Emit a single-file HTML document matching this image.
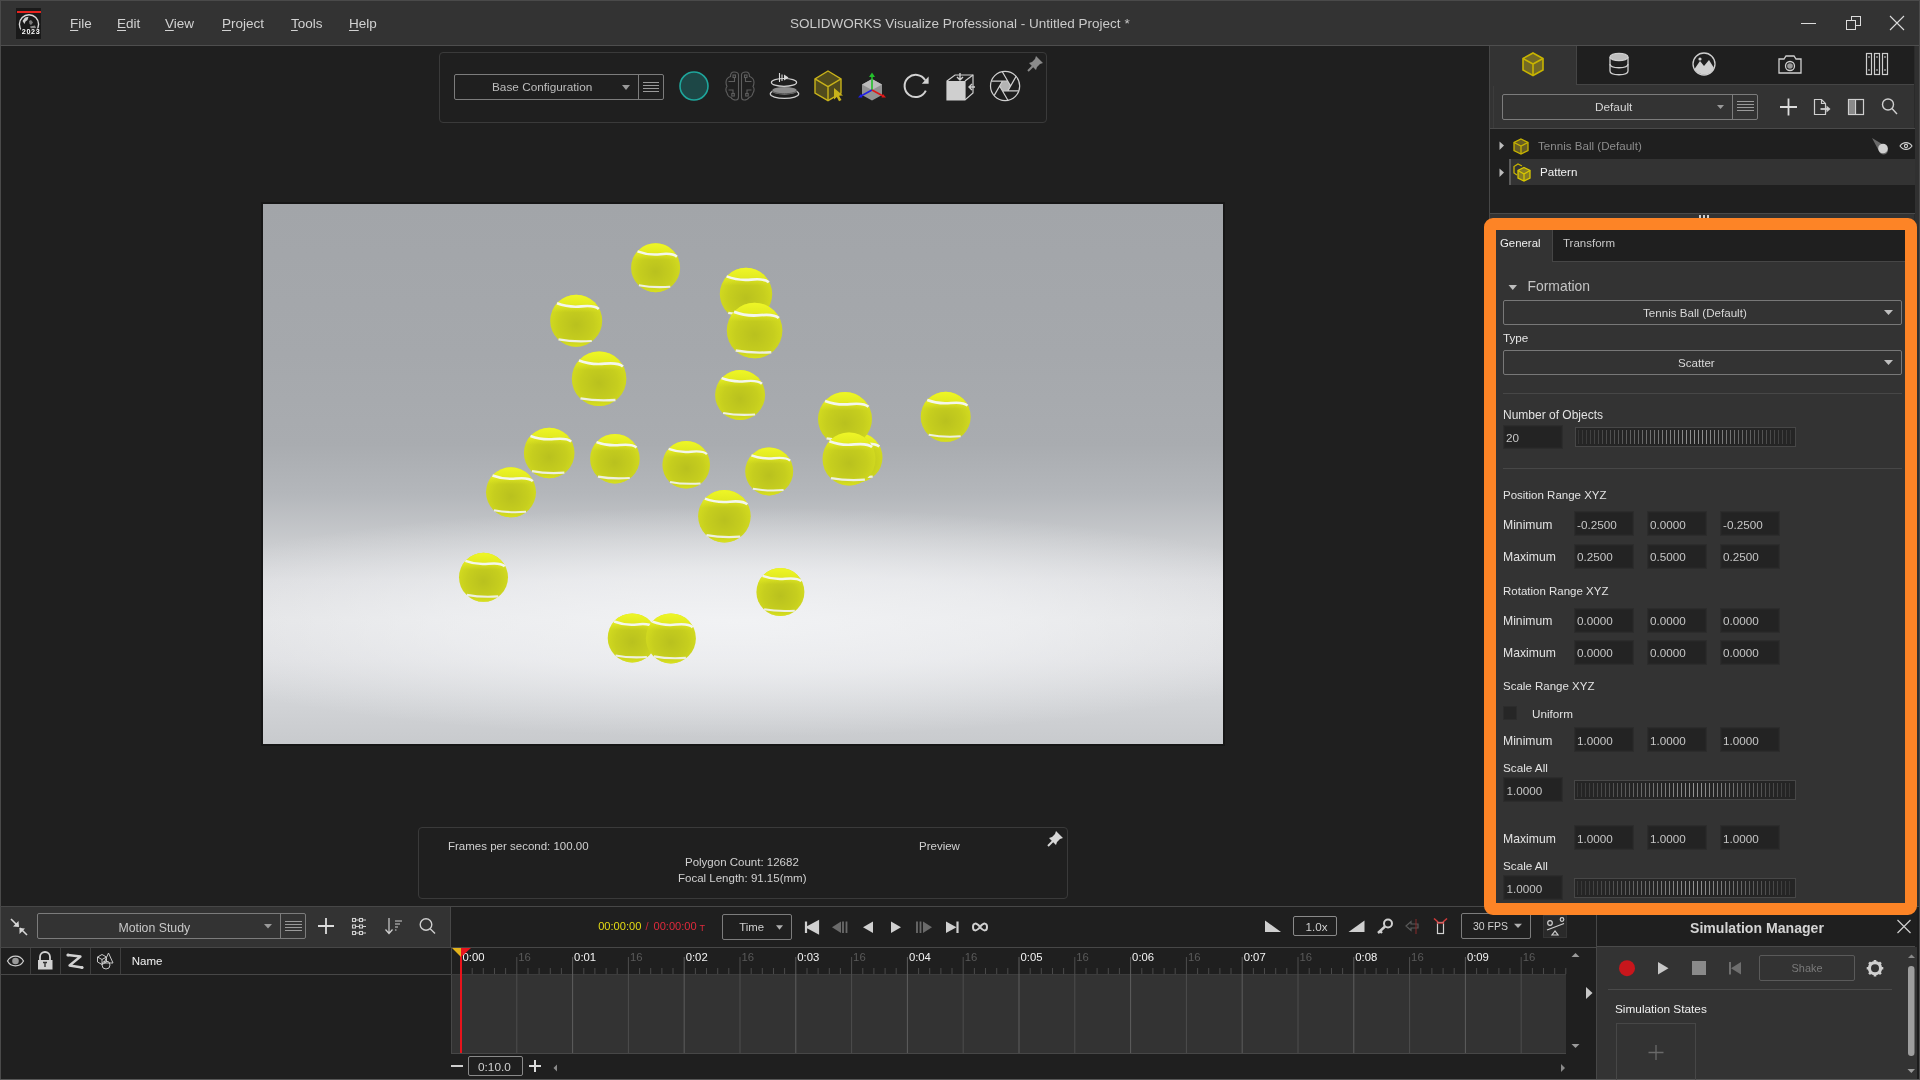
<!DOCTYPE html>
<html><head><meta charset="utf-8">
<style>
*{box-sizing:border-box;margin:0;padding:0}
html,body{width:1920px;height:1080px;overflow:hidden;background:#1f1f1f;font-family:"Liberation Sans",sans-serif;color:#d0d0d0}
.a{position:absolute}
.t{position:absolute;white-space:pre;line-height:1}
svg{position:absolute;overflow:visible}
body{will-change:transform}
.u{text-decoration:underline;text-underline-offset:2px}
.box{position:absolute;background:#232323;border:1px solid #2c2c2c;box-shadow:inset 0 0 0 1px #262626}
.lbl{position:absolute;white-space:pre;line-height:1;font-size:12px;color:#e2e2e2}
.val{position:absolute;white-space:pre;line-height:1;font-size:12px;color:#c4c4c4}
</style></head><body>
<!-- window border -->
<div class="a" style="left:0;top:0;width:1920px;height:1080px;border-left:1px solid #4a4a4a;border-top:1px solid #4a4a4a"></div>

<!-- TITLE BAR -->
<div class="a" style="left:1px;top:1px;width:1919px;height:44px;background:#333333"></div>
<div class="a" style="left:0;top:45px;width:1920px;height:1px;background:#4e4e4e"></div>
<!-- logo -->
<div class="a" style="left:16px;top:8px;width:25px;height:31px;background:#1a1a1a"></div>
<div class="a" style="left:17px;top:11px;width:24px;height:2px;background:#e8231f"></div>
<svg style="left:0;top:0" width="60" height="45">
 <circle cx="29" cy="24.3" r="9.6" fill="none" stroke="#d8d8d8" stroke-width="1.4"/>
 <path d="M22.5,21 L25,17.5 L28.5,16.8 L27.5,20 L25.5,21.5 L24.5,24 Z" fill="#cfcfcf"/>
 <path d="M29,21 L31,20 L33,22.5 L31,25 L29.5,24 Z" fill="#7a7a7a"/>
 <path d="M30,26.5 L35,25.5 L36,28 L31,28.5 Z" fill="#8a8a8a"/>
 <rect x="21" y="28.5" width="20" height="6" fill="#1a1a1a"/>
 <text x="21.8" y="33.9" font-family="Liberation Sans" font-weight="bold" font-size="7.2" letter-spacing="0.65" fill="#ffffff">2023</text>
</svg>
<div class="t" style="left:70px;top:17px;font-size:13.5px;color:#d2d2d2"><span class="u">F</span>ile</div>
<div class="t" style="left:117px;top:17px;font-size:13.5px;color:#d2d2d2"><span class="u">E</span>dit</div>
<div class="t" style="left:165px;top:17px;font-size:13.5px;color:#d2d2d2"><span class="u">V</span>iew</div>
<div class="t" style="left:222px;top:17px;font-size:13.5px;color:#d2d2d2"><span class="u">P</span>roject</div>
<div class="t" style="left:291px;top:17px;font-size:13.5px;color:#d2d2d2"><span class="u">T</span>ools</div>
<div class="t" style="left:349px;top:17px;font-size:13.5px;color:#d2d2d2"><span class="u">H</span>elp</div>
<div class="t" style="left:790px;top:17px;font-size:13.5px;color:#cacaca">SOLIDWORKS Visualize Professional - Untitled Project *</div>
<!-- window controls -->
<div class="a" style="left:1801px;top:23px;width:15px;height:1px;background:#dcdcdc"></div>
<svg style="left:0;top:0" width="1920" height="45">
 <rect x="1851.5" y="16.5" width="9" height="9" fill="none" stroke="#dcdcdc" stroke-width="1"/>
 <rect x="1846.5" y="20.5" width="9" height="9" fill="#333" stroke="#dcdcdc" stroke-width="1"/>
 <path d="M1890,16 L1904,30 M1904,16 L1890,30" stroke="#dcdcdc" stroke-width="1.1"/>
</svg>

<!-- VIEWPORT TOOLBAR -->
<div class="a" style="left:439px;top:52px;width:608px;height:71px;border:1px solid #3a3a3a;border-radius:4px"></div>
<div class="a" style="left:454px;top:74px;width:210px;height:26px;border:1px solid #7c7c7c;border-radius:2px"></div>
<div class="a" style="left:638px;top:75px;width:1px;height:24px;background:#7c7c7c"></div>
<div class="t" style="left:492px;top:82px;font-size:11.8px;color:#bdbdbd">Base Configuration</div>
<svg style="left:0;top:0" width="1100" height="130">
 <path d="M622,85 L630,85 L626,90 Z" fill="#9a9a9a"/>
 <path d="M643,82.5 H659 M643,85.5 H659 M643,88.5 H659 M643,91.5 H659" stroke="#9a9a9a" stroke-width="1"/>
 <circle cx="694" cy="86" r="14" fill="#1d4746" stroke="#1fa69c" stroke-width="1.6"/>
 <!-- brain -->
 <g fill="none" stroke="#5e5e5e" stroke-width="1.1">
  <path d="M738.5,75 C738.5,72.5 736.5,72 734,72 C731.5,72 730.5,74 730.5,76.5 C727.5,77.5 726,79.5 726,82.5 C726,84.5 726.5,85.5 727,86.5 C725.8,88 725.8,91 727,93 C727.5,95.5 729,97 731,97.5 C732,99.5 734,100 736,100 C738,100 738.5,99 738.5,97 Z"/>
  <path d="M741.5,75 C741.5,72.5 743.5,72 746,72 C748.5,72 749.5,74 749.5,76.5 C752.5,77.5 754,79.5 754,82.5 C754,84.5 753.5,85.5 753,86.5 C754.2,88 754.2,91 753,93 C752.5,95.5 751,97 749,97.5 C748,99.5 746,100 744,100 C742,100 741.5,99 741.5,97 Z"/>
  <path d="M728.5,81.5 H734.5 V77.5 M728.5,90 H733 V93.5 M751.5,81.5 H745.5 V77.5 M751.5,90 H747 V93.5"/>
  <rect x="733" y="75" width="2.5" height="2.5"/><rect x="731.8" y="93.5" width="2.5" height="2.5"/>
  <rect x="744.5" y="75" width="2.5" height="2.5"/><rect x="745.7" y="93.5" width="2.5" height="2.5"/>
 </g>
 <!-- turntable -->
 <g>
  <ellipse cx="784.5" cy="93.8" rx="14.2" ry="4.6" fill="none" stroke="#d0d0d0" stroke-width="1.3"/>
  <ellipse cx="784.5" cy="90.8" rx="12.5" ry="3.9" fill="#8c8c8c"/>
  <path d="M772,90 C772,95 797,95 797,90" fill="none" stroke="#555" stroke-width="1"/>
  <ellipse cx="784" cy="82.4" rx="12.6" ry="3.9" fill="none" stroke="#d0d0d0" stroke-width="1.2"/>
  <path d="M779.5,73 V82 M782,74.5 V81" stroke="#d8d8d8" stroke-width="1.1"/>
  <path d="M784,74.5 L788.5,77.5 L784,80.5 Z" fill="#d8d8d8"/>
 </g>
 <!-- yellow cube with cursor -->
 <g stroke="#c8b21a" stroke-width="1.4" fill="rgba(200,178,26,0.3)">
  <path d="M828,71 L841,78.8 L841,93.2 L828,100.7 L815,93.2 L815,78.8 Z"/>
  <path d="M815,78.8 L828,86.6 L841,78.8 M828,86.6 V100.7" fill="none"/>
 </g>
 <path d="M834,88 L843,95.5 L839,95.8 L841.5,100 L839,101.2 L836.8,97 L834,99.5 Z" fill="#c8b21a"/>
 <!-- axis cube -->
 <g>
  <path d="M872,79 L882,84.5 L882,95 L872,100.5 L862,95 L862,84.5 Z" fill="#a8a8a8" fill-opacity="0.85"/>
  <path d="M862,84.5 L872,90 L882,84.5 L872,79 Z" fill="#bcbcbc"/>
  <path d="M872,90 V76" stroke="#22c02a" stroke-width="1.6"/>
  <path d="M869,77 L872,72.5 L875,77 Z" fill="#22c02a"/>
  <path d="M872,90 L861,96" stroke="#2020e8" stroke-width="1.6"/>
  <path d="M858,97.5 L861,94 L862.5,97.5 Z" fill="#2020e8"/>
  <path d="M872,90 L883,96" stroke="#e01818" stroke-width="1.6"/>
  <path d="M886,97.5 L883,94 L881.5,97.5 Z" fill="#e01818"/>
 </g>
 <!-- refresh -->
 <path d="M925.8,90.6 A11.1,11.1 0 1 1 925.2,80.2" fill="none" stroke="#d2d2d2" stroke-width="2"/>
 <path d="M928.6,76.6 L928.6,83.8 L921.8,83.8 Z" fill="#d2d2d2"/>
 <!-- cube arrows -->
 <g>
  <path d="M947,81 L955,75 L973,75 L973,93 L965,100 L947,100 Z" fill="none" stroke="#cfcfcf" stroke-width="1.2"/>
  <rect x="947" y="81" width="18" height="19" fill="#cfcfcf"/>
  <path d="M965,81 L973,75 M965,81 V100" stroke="#cfcfcf" stroke-width="1.2"/>
  <path d="M960,73 V79 M957,77 L960,80 L963,77" fill="none" stroke="#cfcfcf" stroke-width="1.4"/>
  <path d="M975,87 H969 M972,84 L969,87 L972,90" fill="none" stroke="#cfcfcf" stroke-width="1.4"/>
 </g>
 <!-- aperture -->
 <path d="M1010.6,86.0 L1007.9,90.8 L1002.4,90.8 L999.6,86.0 L1002.4,81.2 L1007.9,81.2 Z" fill="#b4b4b4"/>
 <g fill="none" stroke="#d0d0d0" stroke-width="1.2">
  <circle cx="1005.1" cy="86" r="14.6"/>
  <path d="M1007.9,90.8 L1016.1,76.4 M1002.4,90.8 L1018.9,90.8 M999.6,86.0 L1007.9,100.3 M1002.4,81.2 L994.1,95.6 M1007.9,81.2 L991.3,81.2 M1010.6,86.0 L1002.3,71.7"/>
 </g>
 <!-- pin -->
 <g fill="#8a8a8a">
  <path d="M1036,56 L1043,63 L1040,64 L1037,67 L1036,70 L1029,63 L1032,62 L1035,59 Z"/>
  <path d="M1033,66 L1028,71" stroke="#8a8a8a" stroke-width="2"/>
 </g>
</svg>
<!-- RENDER VIEW -->
<div class="a" style="left:261px;top:202px;width:964px;height:544px;background:#161616"></div>
<div class="a" style="left:263px;top:204px;width:960px;height:540px;overflow:hidden;background:radial-gradient(ellipse 640px 115px at 470px 418px,rgba(246,247,249,0.78) 0%,rgba(246,247,249,0.55) 45%,rgba(246,247,249,0.22) 78%,rgba(246,247,249,0) 100%),linear-gradient(180deg,#a2a5a9 0px,#a5a8ac 150px,#a9acb0 240px,#b4b7bb 290px,#c8cacd 336px,#d9dadd 376px,#e0e1e3 416px,#dcdde0 456px,#d2d4d7 496px,#c8cacd 540px)">
 
 <svg style="left:0;top:0" width="960" height="540">
  <defs><radialGradient id="bg" cx="0.5" cy="0.58" r="0.62"><stop offset="0" stop-color="#b9c11e"/><stop offset="0.55" stop-color="#c6ce1e"/><stop offset="1" stop-color="#d8e020"/></radialGradient><linearGradient id="tp" x1="0" y1="0" x2="0" y2="1"><stop offset="0" stop-color="#eef626" stop-opacity="1"/><stop offset="0.18" stop-color="#e6ee22" stop-opacity="0.9"/><stop offset="0.34" stop-color="#dde520" stop-opacity="0"/><stop offset="0.85" stop-color="#d6de20" stop-opacity="0"/><stop offset="1" stop-color="#dce420" stop-opacity="0.8"/></linearGradient></defs>
<g transform="translate(483.0,90.0)"><circle r="26.2" fill="url(#bg)"/><circle r="26.2" fill="url(#tp)"/><path d="M-19.4,-17.6 Q-7.9,-13.1 5.2,-14.4 T22.8,-11.8" stroke="#f4f6ec" stroke-width="2.6" fill="none"/><path d="M-17.8,18.9 Q-2.6,21.7 15.7,20.4" stroke="#eef0e0" stroke-width="2.2" fill="none"/></g>
<g transform="translate(491.6,126.5)"><circle r="27.8" fill="url(#bg)"/><circle r="27.8" fill="url(#tp)"/><path d="M-20.6,-18.6 Q-8.3,-13.9 5.6,-15.3 T24.2,-12.5" stroke="#f4f6ec" stroke-width="2.8" fill="none"/><path d="M-18.9,20.0 Q-2.8,23.1 16.7,21.7" stroke="#eef0e0" stroke-width="2.4" fill="none"/></g>
<g transform="translate(392.6,63.7)"><circle r="24.5" fill="url(#bg)"/><circle r="24.5" fill="url(#tp)"/><path d="M-18.1,-16.4 Q-7.3,-12.2 4.9,-13.5 T21.3,-11.0" stroke="#f4f6ec" stroke-width="2.5" fill="none"/><path d="M-16.7,17.6 Q-2.5,20.3 14.7,19.1" stroke="#eef0e0" stroke-width="2.1" fill="none"/></g>
<g transform="translate(313.2,116.7)"><circle r="26.0" fill="url(#bg)"/><circle r="26.0" fill="url(#tp)"/><path d="M-19.2,-17.4 Q-7.8,-13.0 5.2,-14.3 T22.6,-11.7" stroke="#f4f6ec" stroke-width="2.6" fill="none"/><path d="M-17.7,18.7 Q-2.6,21.6 15.6,20.3" stroke="#eef0e0" stroke-width="2.2" fill="none"/></g>
<g transform="translate(336.1,174.7)"><circle r="27.3" fill="url(#bg)"/><circle r="27.3" fill="url(#tp)"/><path d="M-20.2,-18.3 Q-8.2,-13.7 5.5,-15.0 T23.8,-12.3" stroke="#f4f6ec" stroke-width="2.7" fill="none"/><path d="M-18.6,19.7 Q-2.7,22.7 16.4,21.3" stroke="#eef0e0" stroke-width="2.3" fill="none"/></g>
<g transform="translate(477.1,191.0)"><circle r="25.0" fill="url(#bg)"/><circle r="25.0" fill="url(#tp)"/><path d="M-18.5,-16.8 Q-7.5,-12.5 5.0,-13.8 T21.8,-11.2" stroke="#f4f6ec" stroke-width="2.5" fill="none"/><path d="M-17.0,18.0 Q-2.5,20.8 15.0,19.5" stroke="#eef0e0" stroke-width="2.1" fill="none"/></g>
<g transform="translate(682.7,212.8)"><circle r="25.0" fill="url(#bg)"/><circle r="25.0" fill="url(#tp)"/><path d="M-18.5,-16.8 Q-7.5,-12.5 5.0,-13.8 T21.8,-11.2" stroke="#f4f6ec" stroke-width="2.5" fill="none"/><path d="M-17.0,18.0 Q-2.5,20.8 15.0,19.5" stroke="#eef0e0" stroke-width="2.1" fill="none"/></g>
<g transform="translate(595.0,253.5)"><circle r="24.5" fill="url(#bg)"/><circle r="24.5" fill="url(#tp)"/><path d="M-18.1,-16.4 Q-7.3,-12.2 4.9,-13.5 T21.3,-11.0" stroke="#f4f6ec" stroke-width="2.5" fill="none"/><path d="M-16.7,17.6 Q-2.5,20.3 14.7,19.1" stroke="#eef0e0" stroke-width="2.1" fill="none"/></g>
<g transform="translate(582.0,215.0)"><circle r="27.0" fill="url(#bg)"/><circle r="27.0" fill="url(#tp)"/><path d="M-20.0,-18.1 Q-8.1,-13.5 5.4,-14.9 T23.5,-12.2" stroke="#f4f6ec" stroke-width="2.7" fill="none"/><path d="M-18.4,19.4 Q-2.7,22.4 16.2,21.1" stroke="#eef0e0" stroke-width="2.3" fill="none"/></g>
<g transform="translate(586.0,255.0)"><circle r="26.5" fill="url(#bg)"/><circle r="26.5" fill="url(#tp)"/><path d="M-19.6,-17.8 Q-7.9,-13.2 5.3,-14.6 T23.1,-11.9" stroke="#f4f6ec" stroke-width="2.7" fill="none"/><path d="M-18.0,19.1 Q-2.7,22.0 15.9,20.7" stroke="#eef0e0" stroke-width="2.3" fill="none"/></g>
<g transform="translate(286.2,249.0)"><circle r="25.3" fill="url(#bg)"/><circle r="25.3" fill="url(#tp)"/><path d="M-18.7,-17.0 Q-7.6,-12.7 5.1,-13.9 T22.0,-11.4" stroke="#f4f6ec" stroke-width="2.5" fill="none"/><path d="M-17.2,18.2 Q-2.5,21.0 15.2,19.7" stroke="#eef0e0" stroke-width="2.2" fill="none"/></g>
<g transform="translate(351.9,254.7)"><circle r="24.8" fill="url(#bg)"/><circle r="24.8" fill="url(#tp)"/><path d="M-18.4,-16.6 Q-7.4,-12.4 5.0,-13.6 T21.6,-11.2" stroke="#f4f6ec" stroke-width="2.5" fill="none"/><path d="M-16.9,17.9 Q-2.5,20.6 14.9,19.3" stroke="#eef0e0" stroke-width="2.1" fill="none"/></g>
<g transform="translate(423.2,260.8)"><circle r="23.8" fill="url(#bg)"/><circle r="23.8" fill="url(#tp)"/><path d="M-17.6,-15.9 Q-7.1,-11.9 4.8,-13.1 T20.7,-10.7" stroke="#f4f6ec" stroke-width="2.4" fill="none"/><path d="M-16.2,17.1 Q-2.4,19.8 14.3,18.6" stroke="#eef0e0" stroke-width="2.0" fill="none"/></g>
<g transform="translate(506.2,267.4)"><circle r="24.0" fill="url(#bg)"/><circle r="24.0" fill="url(#tp)"/><path d="M-17.8,-16.1 Q-7.2,-12.0 4.8,-13.2 T20.9,-10.8" stroke="#f4f6ec" stroke-width="2.4" fill="none"/><path d="M-16.3,17.3 Q-2.4,19.9 14.4,18.7" stroke="#eef0e0" stroke-width="2.0" fill="none"/></g>
<g transform="translate(248.0,288.3)"><circle r="25.0" fill="url(#bg)"/><circle r="25.0" fill="url(#tp)"/><path d="M-18.5,-16.8 Q-7.5,-12.5 5.0,-13.8 T21.8,-11.2" stroke="#f4f6ec" stroke-width="2.5" fill="none"/><path d="M-17.0,18.0 Q-2.5,20.8 15.0,19.5" stroke="#eef0e0" stroke-width="2.1" fill="none"/></g>
<g transform="translate(461.4,312.2)"><circle r="26.3" fill="url(#bg)"/><circle r="26.3" fill="url(#tp)"/><path d="M-19.5,-17.6 Q-7.9,-13.2 5.3,-14.5 T22.9,-11.8" stroke="#f4f6ec" stroke-width="2.6" fill="none"/><path d="M-17.9,18.9 Q-2.6,21.8 15.8,20.5" stroke="#eef0e0" stroke-width="2.2" fill="none"/></g>
<g transform="translate(220.5,373.3)"><circle r="24.5" fill="url(#bg)"/><circle r="24.5" fill="url(#tp)"/><path d="M-18.1,-16.4 Q-7.3,-12.2 4.9,-13.5 T21.3,-11.0" stroke="#f4f6ec" stroke-width="2.5" fill="none"/><path d="M-16.7,17.6 Q-2.5,20.3 14.7,19.1" stroke="#eef0e0" stroke-width="2.1" fill="none"/></g>
<g transform="translate(517.4,388.0)"><circle r="24.0" fill="url(#bg)"/><circle r="24.0" fill="url(#tp)"/><path d="M-17.8,-16.1 Q-7.2,-12.0 4.8,-13.2 T20.9,-10.8" stroke="#f4f6ec" stroke-width="2.4" fill="none"/><path d="M-16.3,17.3 Q-2.4,19.9 14.4,18.7" stroke="#eef0e0" stroke-width="2.0" fill="none"/></g>
<g transform="translate(369.2,433.9)"><circle r="24.5" fill="url(#bg)"/><circle r="24.5" fill="url(#tp)"/><path d="M-18.1,-16.4 Q-7.3,-12.2 4.9,-13.5 T21.3,-11.0" stroke="#f4f6ec" stroke-width="2.5" fill="none"/><path d="M-16.7,17.6 Q-2.5,20.3 14.7,19.1" stroke="#eef0e0" stroke-width="2.1" fill="none"/></g>
<g transform="translate(407.9,434.4)"><circle r="25.0" fill="url(#bg)"/><circle r="25.0" fill="url(#tp)"/><path d="M-18.5,-16.8 Q-7.5,-12.5 5.0,-13.8 T21.8,-11.2" stroke="#f4f6ec" stroke-width="2.5" fill="none"/><path d="M-17.0,18.0 Q-2.5,20.8 15.0,19.5" stroke="#eef0e0" stroke-width="2.1" fill="none"/></g>

 </svg>
</div>

<!-- STATS BOX -->
<div class="a" style="left:418px;top:827px;width:650px;height:72px;border:1px solid #3a3a3a;border-radius:4px"></div>
<div class="t" style="left:448px;top:841px;font-size:11.5px;color:#d0d0d0">Frames per second: 100.00</div>
<div class="t" style="left:919px;top:841px;font-size:11.5px;color:#d0d0d0">Preview</div>
<div class="t" style="left:685px;top:857px;font-size:11.5px;color:#d0d0d0">Polygon Count: 12682</div>
<div class="t" style="left:678px;top:873px;font-size:11.5px;color:#d0d0d0">Focal Length: 91.15(mm)</div>
<svg style="left:0;top:0" width="1100" height="900">
 <g fill="#d8d8d8">
  <path d="M1056,831 L1063,838 L1060,839 L1057,842 L1056,845 L1049,838 L1052,837 L1055,834 Z"/>
 </g>
 <path d="M1053,841 L1048,846" stroke="#d8d8d8" stroke-width="2"/>
</svg>
<!-- RIGHT PANEL -->
<div class="a" style="left:1489px;top:46px;width:1px;height:861px;background:#474747"></div>
<div class="a" style="left:1490px;top:46px;width:425px;height:861px;background:#333333"></div>
<div class="a" style="left:1493px;top:86px;width:1px;height:42px;background:#3c3c3c"></div>
<div class="a" style="left:1914px;top:46px;width:1px;height:861px;background:#2a2a2a"></div><div class="a" style="left:1915px;top:46px;width:4px;height:861px;background:#303030"></div>
<div class="a" style="left:1576px;top:46px;width:338px;height:39px;background:#1f1f1f;border-left:1px solid #454545;border-bottom:1px solid #454545"></div>
<div class="a" style="left:1490px;top:128px;width:425px;height:1px;background:#4a4a4a"></div>
<div class="a" style="left:1490px;top:129px;width:425px;height:84px;background:#1f1f1f"></div>
<div class="a" style="left:1511px;top:159px;width:404px;height:26px;background:#333333"></div>
<div class="a" style="left:1509px;top:159px;width:2px;height:26px;background:#5a5a5a"></div>
<div class="a" style="left:1490px;top:213px;width:425px;height:1px;background:#4a4a4a"></div>
<svg style="left:0;top:0" width="1920" height="230">
 <!-- tab icons -->
 <g stroke="#c8b400" stroke-width="1.6" fill="rgba(190,170,20,0.45)">
  <path d="M1533,53 L1543,58.5 L1543,70 L1533,75.5 L1523,70 L1523,58.5 Z"/>
  <path d="M1523,58.5 L1533,64 L1543,58.5 M1533,64 V75.5" fill="none"/>
 </g>
 <g fill="none" stroke="#cfcfcf" stroke-width="1.3">
  <ellipse cx="1619" cy="57" rx="9" ry="3.6" fill="#bdbdbd"/>
  <path d="M1610,57 V71 C1610,76 1628,76 1628,71 V57"/>
  <path d="M1610,64 C1610,69 1628,69 1628,64"/>
 </g>
 <circle cx="1704" cy="64" r="11" fill="none" stroke="#cfcfcf" stroke-width="1.3"/>
 <path d="M1694.5,69 L1700,61 L1704,66 L1709,60 L1714,68 A11,11 0 0 1 1694.5,69 Z" fill="#cfcfcf"/>
 <circle cx="1700" cy="59" r="1.6" fill="#cfcfcf"/>
 <g fill="none" stroke="#cfcfcf" stroke-width="1.3">
  <path d="M1779,59 H1784 L1786,56 H1794 L1796,59 H1801 V73 H1779 Z"/>
  <circle cx="1790" cy="66" r="4.5"/>
 </g>
 <circle cx="1790" cy="66" r="2.8" fill="#9a9a9a"/>
 <g fill="none" stroke="#cfcfcf" stroke-width="1.2">
  <rect x="1866.5" y="53.5" width="5" height="21"/><rect x="1874.5" y="53.5" width="5" height="21"/><rect x="1882.5" y="53.5" width="5" height="21"/>
  <path d="M1868,57 H1870 M1876,57 H1878 M1884,57 H1886 M1868,70 H1870 M1876,70 H1878 M1884,70 H1886"/>
 </g>
 <!-- toolbar row -->
 <path d="M1717,105 L1724,105 L1720.5,109 Z" fill="#9a9a9a"/>
 <g stroke="#9a9a9a" stroke-width="1"><path d="M1737,101.5 H1754 M1737,104.5 H1754 M1737,107.5 H1754 M1737,110.5 H1754"/></g>
 <path d="M1780,107 H1797 M1788.5,98.5 V115.5" stroke="#dcdcdc" stroke-width="1.8"/>
 <g fill="none" stroke="#cfcfcf" stroke-width="1.2">
  <path d="M1814.5,99.5 H1821.5 L1825.5,103.5 V114.5 H1814.5 Z M1821.5,99.5 V103.5 H1825.5"/>
  <path d="M1820.5,109 H1827" stroke-width="1.8"/>
 </g>
 <path d="M1826.5,105.5 L1830.5,109 L1826.5,112.5 Z" fill="#cfcfcf"/>
 <g fill="none" stroke="#cfcfcf" stroke-width="1.2"><rect x="1848.5" y="99.5" width="15" height="15"/><path d="M1855.5,99.5 V114.5"/></g>
 <rect x="1849" y="100" width="6" height="14" fill="#8a8a8a"/>
 <g fill="none" stroke="#cfcfcf" stroke-width="1.4"><circle cx="1888" cy="104.5" r="5.5"/><path d="M1892,108.5 L1897,114"/></g>
 <!-- tree -->
 <path d="M1499.5,141.5 L1504,145.5 L1499.5,150 Z" fill="#bdbdbd"/>
 <path d="M1499.5,168.5 L1504,172.5 L1499.5,177 Z" fill="#bdbdbd"/>
 <g stroke="#c8b400" stroke-width="1.3" fill="rgba(150,135,40,0.6)">
  <path d="M1521,139 L1528,142.5 L1528,150.5 L1521,154 L1514,150.5 L1514,142.5 Z"/>
  <path d="M1514,142.5 L1521,146 L1528,142.5 M1521,146 V154" fill="none"/>
 </g>
 <g stroke="#c8b400" stroke-width="1.3" fill="none">
  <path d="M1522,166 L1518,164 L1514,166.5 V173 L1517,175"/>
 </g>
 <g stroke="#d8c800" stroke-width="1.3" fill="rgba(170,155,30,0.7)">
  <path d="M1524,167.5 L1530,170.5 L1530,178 L1524,181 L1518,178 L1518,170.5 Z"/>
  <path d="M1518,170.5 L1524,174 L1530,170.5 M1524,174 V181" fill="none"/>
 </g>
 <!-- comet -->
 <path d="M1872,138 L1887,147 A4.5,4.5 0 0 1 1880,153 Z" fill="#6a6a6a"/>
 <circle cx="1883" cy="148.5" r="4.8" fill="#d0d0d0"/>
 <g fill="none" stroke="#cfcfcf" stroke-width="1.1"><path d="M1900,146 C1903,141.5 1909,141.5 1912,146 C1909,150.5 1903,150.5 1900,146 Z"/><circle cx="1906" cy="146" r="1.6"/></g>
 <g fill="#cfcfcf"><rect x="1699" y="215" width="2" height="3"/><rect x="1703" y="215" width="2" height="3"/><rect x="1707" y="215" width="2" height="3"/></g>
</svg>
<div class="a" style="left:1502px;top:94px;width:256px;height:26px;border:1px solid #7c7c7c;border-radius:2px"></div>
<div class="a" style="left:1732px;top:95px;width:1px;height:24px;background:#7c7c7c"></div>
<div class="t" style="left:1595px;top:102px;font-size:11.8px;color:#d6d6d6">Default</div>
<div class="t" style="left:1538px;top:140px;font-size:11.6px;color:#8c8c8c">Tennis Ball (Default)</div>
<div class="t" style="left:1540px;top:166px;font-size:11.6px;color:#f2f2f2">Pattern</div>
<!-- BOTTOM PANEL -->
<div class="a" style="left:0;top:906px;width:1920px;height:1px;background:#474747"></div>
<div class="a" style="left:1px;top:907px;width:450px;height:40px;background:#333333;border-right:1px solid #474747"></div>
<div class="a" style="left:0;top:947px;width:1596px;height:1px;background:#474747"></div>
<div class="a" style="left:0;top:974px;width:451px;height:1px;background:#474747"></div>
<div class="a" style="left:30px;top:948px;width:1px;height:26px;background:#3e3e3e"></div>
<div class="a" style="left:60px;top:948px;width:1px;height:26px;background:#3e3e3e"></div>
<div class="a" style="left:90px;top:948px;width:1px;height:26px;background:#3e3e3e"></div>
<div class="a" style="left:120px;top:948px;width:1px;height:26px;background:#3e3e3e"></div>
<div class="a" style="left:451px;top:948px;width:1px;height:106px;background:#474747"></div>
<div class="a" style="left:452px;top:975px;width:1114px;height:79px;background:#333333"></div>
<div class="a" style="left:451px;top:974px;width:1115px;height:1px;background:#3c3c3c"></div>
<div class="a" style="left:451px;top:1053px;width:1115px;height:1px;background:#474747"></div>
<svg style="left:0;top:0" width="1920" height="1080">
<path d="M461.0,957 V1053" stroke="#5e5e5e" stroke-width="1"/>
<path d="M516.8,957 V1053" stroke="#4e4e4e" stroke-width="1"/>
<path d="M572.6,957 V1053" stroke="#5e5e5e" stroke-width="1"/>
<path d="M628.4,957 V1053" stroke="#4e4e4e" stroke-width="1"/>
<path d="M684.2,957 V1053" stroke="#5e5e5e" stroke-width="1"/>
<path d="M740.0,957 V1053" stroke="#4e4e4e" stroke-width="1"/>
<path d="M795.8,957 V1053" stroke="#5e5e5e" stroke-width="1"/>
<path d="M851.6,957 V1053" stroke="#4e4e4e" stroke-width="1"/>
<path d="M907.4,957 V1053" stroke="#5e5e5e" stroke-width="1"/>
<path d="M963.2,957 V1053" stroke="#4e4e4e" stroke-width="1"/>
<path d="M1019.0,957 V1053" stroke="#5e5e5e" stroke-width="1"/>
<path d="M1074.8,957 V1053" stroke="#4e4e4e" stroke-width="1"/>
<path d="M1130.6,957 V1053" stroke="#5e5e5e" stroke-width="1"/>
<path d="M1186.4,957 V1053" stroke="#4e4e4e" stroke-width="1"/>
<path d="M1242.2,957 V1053" stroke="#5e5e5e" stroke-width="1"/>
<path d="M1298.0,957 V1053" stroke="#4e4e4e" stroke-width="1"/>
<path d="M1353.8,957 V1053" stroke="#5e5e5e" stroke-width="1"/>
<path d="M1409.6,957 V1053" stroke="#4e4e4e" stroke-width="1"/>
<path d="M1465.4,957 V1053" stroke="#5e5e5e" stroke-width="1"/>
<path d="M1521.2,957 V1053" stroke="#4e4e4e" stroke-width="1"/>
<path d="M472.2,968 V974 M483.3,968 V974 M494.5,968 V974 M505.6,968 V974 M528.0,968 V974 M539.1,968 V974 M550.3,968 V974 M561.4,968 V974 M583.8,968 V974 M594.9,968 V974 M606.1,968 V974 M617.2,968 V974 M639.6,968 V974 M650.7,968 V974 M661.9,968 V974 M673.0,968 V974 M695.4,968 V974 M706.5,968 V974 M717.7,968 V974 M728.8,968 V974 M751.2,968 V974 M762.3,968 V974 M773.5,968 V974 M784.6,968 V974 M807.0,968 V974 M818.1,968 V974 M829.3,968 V974 M840.4,968 V974 M862.8,968 V974 M873.9,968 V974 M885.1,968 V974 M896.2,968 V974 M918.6,968 V974 M929.7,968 V974 M940.9,968 V974 M952.0,968 V974 M974.4,968 V974 M985.5,968 V974 M996.7,968 V974 M1007.8,968 V974 M1030.2,968 V974 M1041.3,968 V974 M1052.5,968 V974 M1063.6,968 V974 M1086.0,968 V974 M1097.1,968 V974 M1108.3,968 V974 M1119.4,968 V974 M1141.8,968 V974 M1152.9,968 V974 M1164.1,968 V974 M1175.2,968 V974 M1197.6,968 V974 M1208.7,968 V974 M1219.9,968 V974 M1231.0,968 V974 M1253.4,968 V974 M1264.5,968 V974 M1275.7,968 V974 M1286.8,968 V974 M1309.2,968 V974 M1320.3,968 V974 M1331.5,968 V974 M1342.6,968 V974 M1365.0,968 V974 M1376.1,968 V974 M1387.3,968 V974 M1398.4,968 V974 M1420.8,968 V974 M1431.9,968 V974 M1443.1,968 V974 M1454.2,968 V974 M1476.6,968 V974 M1487.7,968 V974 M1498.9,968 V974 M1510.0,968 V974 M1532.4,968 V974 M1543.5,968 V974 M1554.7,968 V974 M1565.8,968 V974" stroke="#4a4a4a" stroke-width="1"/>
</svg>
<div class="t" style="left:462.5px;top:951.8px;font-size:11.3px;color:#f4f4f4">0:00</div>
<div class="t" style="left:518.3px;top:951.8px;font-size:11.3px;color:#5a5a5a">16</div>
<div class="t" style="left:574.1px;top:951.8px;font-size:11.3px;color:#f4f4f4">0:01</div>
<div class="t" style="left:629.9px;top:951.8px;font-size:11.3px;color:#5a5a5a">16</div>
<div class="t" style="left:685.7px;top:951.8px;font-size:11.3px;color:#f4f4f4">0:02</div>
<div class="t" style="left:741.5px;top:951.8px;font-size:11.3px;color:#5a5a5a">16</div>
<div class="t" style="left:797.3px;top:951.8px;font-size:11.3px;color:#f4f4f4">0:03</div>
<div class="t" style="left:853.1px;top:951.8px;font-size:11.3px;color:#5a5a5a">16</div>
<div class="t" style="left:908.9px;top:951.8px;font-size:11.3px;color:#f4f4f4">0:04</div>
<div class="t" style="left:964.7px;top:951.8px;font-size:11.3px;color:#5a5a5a">16</div>
<div class="t" style="left:1020.5px;top:951.8px;font-size:11.3px;color:#f4f4f4">0:05</div>
<div class="t" style="left:1076.3px;top:951.8px;font-size:11.3px;color:#5a5a5a">16</div>
<div class="t" style="left:1132.1px;top:951.8px;font-size:11.3px;color:#f4f4f4">0:06</div>
<div class="t" style="left:1187.9px;top:951.8px;font-size:11.3px;color:#5a5a5a">16</div>
<div class="t" style="left:1243.7px;top:951.8px;font-size:11.3px;color:#f4f4f4">0:07</div>
<div class="t" style="left:1299.5px;top:951.8px;font-size:11.3px;color:#5a5a5a">16</div>
<div class="t" style="left:1355.3px;top:951.8px;font-size:11.3px;color:#f4f4f4">0:08</div>
<div class="t" style="left:1411.1px;top:951.8px;font-size:11.3px;color:#5a5a5a">16</div>
<div class="t" style="left:1466.9px;top:951.8px;font-size:11.3px;color:#f4f4f4">0:09</div>
<div class="t" style="left:1522.7px;top:951.8px;font-size:11.3px;color:#5a5a5a">16</div>
<div class="a" style="left:460px;top:948px;width:2px;height:105px;background:#e8141c"></div>
<svg style="left:0;top:0" width="1920" height="1080"><path d="M452,948 L461,948 L461,957 Z" fill="#e3b21c"/><path d="M461,948 L471,948 L461,957 Z" fill="#e8141c"/></svg>
<div class="a" style="left:37px;top:913px;width:269px;height:26px;border:1px solid #7c7c7c;border-radius:2px"></div>
<div class="a" style="left:280px;top:914px;width:1px;height:24px;background:#7c7c7c"></div>
<div class="t" style="left:118.4px;top:921.6px;font-size:12.3px;color:#c8c8c8">Motion Study</div>
<svg style="left:0;top:0" width="460" height="980">
 <path d="M264,924 L272,924 L268,928.5 Z" fill="#9a9a9a"/>
 <path d="M285,921.5 H302 M285,924.5 H302 M285,927.5 H302 M285,930.5 H302" stroke="#9a9a9a" stroke-width="1"/>
 <g stroke="#d6d6d6" stroke-width="1.6" fill="none"><path d="M11,919 L18,926 M27,935 L20,928"/></g>
 <path d="M19,927 L13,926.5 L18.5,921 Z M19.5,928 L25,928.5 L19.5,934 Z" fill="#d6d6d6"/>
 <path d="M318,926 H334 M326,918 V934" stroke="#dcdcdc" stroke-width="1.8"/>
 <g fill="none" stroke="#cfcfcf" stroke-width="1.1">
  <rect x="352.5" y="918.5" width="3" height="3"/><rect x="359.5" y="918.5" width="3" height="3"/>
  <rect x="352.5" y="925" width="3" height="3"/><rect x="359.5" y="925" width="3" height="3"/>
  <rect x="352.5" y="931.5" width="3" height="3"/><rect x="359.5" y="931.5" width="3" height="3"/>
  <path d="M356,920 H359 M363,920 H366 M356,926.5 H359 M363,926.5 H366 M356,933 H359 M363,933 H366"/>
 </g>
 <g fill="none" stroke="#cfcfcf" stroke-width="1.2">
  <path d="M389,918 V933 M385.5,929.5 L389,933.5 L392.5,929.5"/>
  <path d="M395,921 H402 M395,924 H400 M395,927 H398 M395,930 H396.5"/>
 </g>
 <g fill="none" stroke="#cfcfcf" stroke-width="1.4"><circle cx="426" cy="924.5" r="5.8"/><path d="M430.2,928.7 L435,933.5"/></g>
 <!-- header icons -->
 <g fill="none" stroke="#cfcfcf" stroke-width="1.2"><path d="M7.5,961 C11,954.5 20,954.5 23.5,961 C20,967.5 11,967.5 7.5,961 Z"/></g>
 <circle cx="15.5" cy="961" r="3.3" fill="#9a9a9a"/>
 <path d="M40,960 V957 A5,5 0 0 1 50,957 V960" fill="none" stroke="#d2d2d2" stroke-width="1.8"/>
 <rect x="38" y="960" width="14.5" height="9.5" fill="#d2d2d2"/>
 <path d="M43,962.5 H47 M45,962.5 V967" stroke="#333" stroke-width="1.4"/>
 <path d="M68,955 L80.5,956.5 L69.5,965.5 L82,967.5" fill="none" stroke="#d2d2d2" stroke-width="2.3" stroke-linecap="round" stroke-linejoin="round"/><circle cx="68" cy="955" r="1.6" fill="#d2d2d2"/><circle cx="82" cy="967.5" r="1.6" fill="#d2d2d2"/>
 <g fill="none" stroke="#c8c8c8" stroke-width="1">
  <path d="M97.5,957 L102,954.5 L106.5,957 V962 L102,964.5 L97.5,962 Z M97.5,957 L102,959.5 L106.5,957 M102,959.5 V964.5"/>
  <path d="M108.5,953 L113,963 H104 Z"/>
  <circle cx="106" cy="965" r="4"/>
 </g>
</svg>
<div class="t" style="left:131.8px;top:955.8px;font-size:11.5px;color:#f2f2f2">Name</div>
<div class="t" style="left:598.2px;top:921.4px;font-size:11.1px;color:#e6dc14">00:00:00</div>
<div class="t" style="left:645.5px;top:921.4px;font-size:11.1px;color:#c8283a">/</div>
<div class="t" style="left:653.5px;top:921.4px;font-size:11.1px;color:#e02a3c">00:00:00</div>
<div class="t" style="left:699.4px;top:923.8px;font-size:9px;color:#e02a3c">T</div>
<div class="a" style="left:722px;top:914px;width:70px;height:26px;border:1px solid #7c7c7c;border-radius:2px"></div>
<div class="t" style="left:739.3px;top:922.2px;font-size:11.4px;color:#d0d0d0">Time</div>
<svg style="left:0;top:0" width="1920" height="1080">
 <path d="M776,925.3 L783,925.3 L779.5,929.7 Z" fill="#b0b0b0"/>
 <path d="M806,921.5 V933 M807.5,927.25 L818,921.5 V933 Z" stroke="#d0d0d0" stroke-width="2.2" fill="#d0d0d0"/>
 <path d="M832,927.25 L841,921.5 V933 Z" fill="#6a6a6a"/><path d="M843,921.5 V933 M846.5,921.5 V933" stroke="#6a6a6a" stroke-width="1.8"/>
 <path d="M863,927.25 L873,921.5 V933 Z" fill="#d0d0d0"/>
 <path d="M901,927.25 L891,921.5 V933 Z" fill="#d0d0d0"/>
 <path d="M923,921.5 L932,927.25 L923,933 Z" fill="#6a6a6a"/><path d="M917,921.5 V933 M920.5,921.5 V933" stroke="#6a6a6a" stroke-width="1.8"/>
 <path d="M946,921.5 L956.5,927.25 L946,933 Z" fill="#d0d0d0"/><path d="M957.5,921.5 V933" stroke="#d0d0d0" stroke-width="2.2"/>
 <path d="M980,927 C976,922 973,923 973,927 C973,931 976,932 980,927 C984,922 987,923 987,927 C987,931 984,932 980,927 Z" fill="none" stroke="#d0d0d0" stroke-width="2"/>
 <!-- right toolbar -->
 <path d="M1265,920.5 L1281,932 L1265,932 Z" fill="#cfcfcf"/>
 <path d="M1348.5,932 L1364.5,920.5 L1364.5,932 Z" fill="#cfcfcf"/>
 <g fill="none" stroke="#cfcfcf" stroke-width="2"><circle cx="1388" cy="923.5" r="4"/></g>
 <path d="M1385,926.5 L1378,933 M1380,931 L1382,933" stroke="#cfcfcf" stroke-width="2.4"/>
 <g fill="none" stroke="#5a5a5a" stroke-width="1.2"><path d="M1406,926 L1411,921.5 V924 H1418 V928 H1411 V930.5 Z"/></g>
 <path d="M1416,919 V934" stroke="#8a2a2a" stroke-width="1"/>
 <g fill="none" stroke="#d23a3a" stroke-width="1.6"><path d="M1434,918.5 L1438,922 M1447,918.5 L1443,922"/></g>
 <rect x="1437.5" y="922.5" width="6" height="11" fill="none" stroke="#d2d2d2" stroke-width="1.2"/>
 <path d="M1437,923 H1444" stroke="#d23a3a" stroke-width="1.4"/>
 <path d="M1514,923.8 L1522,923.8 L1518,928 Z" fill="#b0b0b0"/>
 <rect x="1543.5" y="915.5" width="23" height="22" fill="#2a2a2a" stroke="#353535"/>
 <g fill="none" stroke="#d0d0d0" stroke-width="1.2"><circle cx="1550" cy="923" r="2.3"/><circle cx="1562" cy="919.5" r="1.8"/><path d="M1547,930 L1564,923.5 M1555,931 L1552,935 H1558 Z"/></g>
 <!-- scroll arrows -->
 <path d="M1571.5,957 L1575.5,953 L1579.5,957 Z" fill="#9a9a9a"/>
 <path d="M1571.5,1044 L1575.5,1048 L1579.5,1044 Z" fill="#9a9a9a"/>
 <path d="M1586,987 L1592.5,993 L1586,999 Z" fill="#c8c8c8"/>
 <path d="M1561,1064 L1565,1068 L1561,1072 Z" fill="#8a8a8a"/>
 <path d="M557,1064.5 L553.5,1068 L557,1071.5 Z" fill="#8a8a8a"/>
 <path d="M451,1066 H463" stroke="#cfcfcf" stroke-width="2"/>
 <path d="M529,1066 H541 M535,1060 V1072" stroke="#dcdcdc" stroke-width="2"/>
</svg>
<div class="a" style="left:1293px;top:916px;width:44px;height:20px;border:1px solid #8a8a8a;border-radius:2px"></div>
<div class="t" style="left:1305.6px;top:921.1px;font-size:11.6px;color:#d0d0d0">1.0x</div>
<div class="a" style="left:1461px;top:913px;width:70px;height:26px;border:1px solid #7c7c7c;border-radius:2px"></div>
<div class="t" style="left:1473px;top:921.4px;font-size:10.5px;color:#d0d0d0">30 FPS</div>
<div class="a" style="left:468px;top:1056px;width:55px;height:20px;border:1px solid #8a8a8a;border-radius:2px"></div>
<div class="t" style="left:478px;top:1061.8px;font-size:11.8px;color:#d0d0d0">0:10.0</div>
<div class="a" style="left:1596px;top:907px;width:1px;height:173px;background:#474747"></div>
<div class="a" style="left:1597px;top:946px;width:318px;height:1px;background:#4a4a4a"></div>
<div class="a" style="left:1597px;top:947px;width:318px;height:133px;background:#333333"></div>
<div class="a" style="left:1915px;top:947px;width:2px;height:133px;background:#333333"></div><div class="a" style="left:1915px;top:907px;width:2px;height:40px;background:#1f1f1f"></div><div class="a" style="left:1917px;top:907px;width:2px;height:173px;background:#1c1c1c"></div><div class="a" style="left:1919px;top:0;width:1px;height:1080px;background:#4a4a4a"></div><div class="a" style="left:0;top:1079px;width:1920px;height:1px;background:#575757"></div>
<div class="t" style="left:1690px;top:921.1px;font-size:14.1px;color:#d4d4d4;font-weight:bold">Simulation Manager</div>
<div class="a" style="left:1759px;top:955px;width:96px;height:26px;border:1px solid #5a5a5a;border-radius:2px"></div>
<div class="t" style="left:1791.6px;top:963.2px;font-size:10.9px;color:#7a7a7a">Shake</div>
<div class="a" style="left:1608px;top:989px;width:284px;height:1px;background:#4a4a4a"></div>
<div class="t" style="left:1615px;top:1003.8px;font-size:11.8px;color:#f0f0f0">Simulation States</div>
<div class="a" style="left:1616px;top:1023px;width:80px;height:60px;border:1px solid #474747"></div>
<svg style="left:0;top:0" width="1920" height="1080">
 <path d="M1897.5,920 L1910.5,933 M1910.5,920 L1897.5,933" stroke="#d0d0d0" stroke-width="1.2"/>
 <circle cx="1627" cy="968.2" r="8" fill="#c8161c"/>
 <path d="M1658,962 L1668.5,968.2 L1658,974.4 Z" fill="#c8c8c8"/>
 <rect x="1692" y="961" width="14" height="14" fill="#8a8a8a"/>
 <path d="M1730,962 V974.4" stroke="#6e6e6e" stroke-width="2"/><path d="M1731,968.2 L1741,962 V974.4 Z" fill="#6e6e6e"/>
 <g transform="translate(1875,968.2)"><circle r="5.6" fill="none" stroke="#d0d0d0" stroke-width="3.2"/>
  <path d="M0,-8.3 V-5 M0,5 V8.3 M-8.3,0 H-5 M5,0 H8.3 M-5.9,-5.9 L-3.5,-3.5 M3.5,3.5 L5.9,5.9 M-5.9,5.9 L-3.5,3.5 M3.5,-3.5 L5.9,-5.9" stroke="#d0d0d0" stroke-width="2.6"/></g>
 <path d="M1648.5,1052.5 H1663.5 M1656,1045 V1060" stroke="#6a6a6a" stroke-width="1.3"/>
 <rect x="1908" y="966" width="6.5" height="90" rx="3.2" fill="#9e9e9e"/>
 <path d="M1908,958 L1911.5,954.5 L1915,958 Z" fill="#8a8a8a"/>
 <path d="M1907.5,1069 L1911.3,1073 L1915,1069 Z" fill="#9a9a9a"/>
</svg>
<!-- PROPERTIES (orange) -->
<div class="a" style="left:1484px;top:218px;width:433px;height:697px;border:12px solid #fd8426;border-radius:9px;background:#333333"></div>
<div class="a" style="left:1552px;top:230px;width:353px;height:32px;background:#1f1f1f;border-left:1px solid #464646;border-bottom:1px solid #464646"></div>
<div class="t" style="left:1500px;top:237.9px;font-size:11.4px;color:#f0f0f0">General</div>
<div class="t" style="left:1563px;top:237.9px;font-size:11.5px;color:#c8c8c8">Transform</div>
<svg style="left:0;top:0" width="1920" height="400"><path d="M1508.5,285 L1517,285 L1512.75,290 Z" fill="#bdbdbd"/><path d="M1884,310 L1893,310 L1888.5,315 Z" fill="#c0c0c0"/><path d="M1884,360 L1893,360 L1888.5,365 Z" fill="#c0c0c0"/></svg>
<div class="t" style="left:1527.5px;top:279.8px;font-size:13.9px;color:#c4c4c4">Formation</div>
<div class="a" style="left:1503px;top:300px;width:399px;height:25px;border:1px solid #787878;border-radius:2px"></div>
<div class="t" style="left:1643px;top:307.1px;font-size:11.6px;color:#d8d8d8">Tennis Ball (Default)</div>
<div class="t" style="left:1503px;top:331.6px;font-size:11.7px;color:#e6e6e6">Type</div>
<div class="a" style="left:1503px;top:350px;width:399px;height:25px;border:1px solid #787878;border-radius:2px"></div>
<div class="t" style="left:1678px;top:357.1px;font-size:11.6px;color:#d8d8d8">Scatter</div>
<div class="a" style="left:1503px;top:393px;width:399px;height:1px;background:#474747"></div>
<div class="t" style="left:1503px;top:408.8px;font-size:12.0px;color:#e2e2e2">Number of Objects</div>
<div class="box" style="left:1503px;top:425px;width:60px;height:24px"></div>
<div class="t" style="left:1506px;top:431.9px;font-size:11.7px;color:#c8c8c8">20</div>
<div class="a" style="left:1575px;top:427px;width:221px;height:20px;background:#252525;border:1px solid #474747"></div><div class="a" style="left:1578px;top:430px;width:215px;height:14px;background:repeating-linear-gradient(90deg,#959595 0,#959595 1px,transparent 1px,transparent 4px);-webkit-mask-image:linear-gradient(90deg,rgba(0,0,0,0.15),rgba(0,0,0,1) 55%,rgba(0,0,0,0.15))"></div>
<div class="a" style="left:1503px;top:468px;width:399px;height:1px;background:#474747"></div>
<div class="t" style="left:1503px;top:489.9px;font-size:11.5px;color:#e2e2e2">Position Range XYZ</div>
<div class="t" style="left:1503px;top:518.8px;font-size:12.2px;color:#e2e2e2">Minimum</div>
<div class="box" style="left:1574px;top:511px;width:60px;height:25px"></div>
<div class="t" style="left:1577px;top:518.6px;font-size:11.7px;color:#c6c6c6">-0.2500</div>
<div class="box" style="left:1647px;top:511px;width:60px;height:25px"></div>
<div class="t" style="left:1650px;top:518.6px;font-size:11.7px;color:#c6c6c6">0.0000</div>
<div class="box" style="left:1720px;top:511px;width:60px;height:25px"></div>
<div class="t" style="left:1723px;top:518.6px;font-size:11.7px;color:#c6c6c6">-0.2500</div>
<div class="t" style="left:1503px;top:551.0px;font-size:12.2px;color:#e2e2e2">Maximum</div>
<div class="box" style="left:1574px;top:543.5px;width:60px;height:25px"></div>
<div class="t" style="left:1577px;top:551.1px;font-size:11.7px;color:#c6c6c6">0.2500</div>
<div class="box" style="left:1647px;top:543.5px;width:60px;height:25px"></div>
<div class="t" style="left:1650px;top:551.1px;font-size:11.7px;color:#c6c6c6">0.5000</div>
<div class="box" style="left:1720px;top:543.5px;width:60px;height:25px"></div>
<div class="t" style="left:1723px;top:551.1px;font-size:11.7px;color:#c6c6c6">0.2500</div>
<div class="t" style="left:1503px;top:585.5px;font-size:11.5px;color:#e2e2e2">Rotation Range XYZ</div>
<div class="t" style="left:1503px;top:614.7px;font-size:12.2px;color:#e2e2e2">Minimum</div>
<div class="box" style="left:1574px;top:607.5px;width:60px;height:25px"></div>
<div class="t" style="left:1577px;top:615.1px;font-size:11.7px;color:#c6c6c6">0.0000</div>
<div class="box" style="left:1647px;top:607.5px;width:60px;height:25px"></div>
<div class="t" style="left:1650px;top:615.1px;font-size:11.7px;color:#c6c6c6">0.0000</div>
<div class="box" style="left:1720px;top:607.5px;width:60px;height:25px"></div>
<div class="t" style="left:1723px;top:615.1px;font-size:11.7px;color:#c6c6c6">0.0000</div>
<div class="t" style="left:1503px;top:646.8px;font-size:12.2px;color:#e2e2e2">Maximum</div>
<div class="box" style="left:1574px;top:639.5px;width:60px;height:25px"></div>
<div class="t" style="left:1577px;top:647.1px;font-size:11.7px;color:#c6c6c6">0.0000</div>
<div class="box" style="left:1647px;top:639.5px;width:60px;height:25px"></div>
<div class="t" style="left:1650px;top:647.1px;font-size:11.7px;color:#c6c6c6">0.0000</div>
<div class="box" style="left:1720px;top:639.5px;width:60px;height:25px"></div>
<div class="t" style="left:1723px;top:647.1px;font-size:11.7px;color:#c6c6c6">0.0000</div>
<div class="t" style="left:1503px;top:681.2px;font-size:11.5px;color:#e2e2e2">Scale Range XYZ</div>
<div class="a" style="left:1503px;top:706px;width:14px;height:14px;background:#262626;border:1px solid #2c2c2c"></div>
<div class="t" style="left:1532px;top:707.9px;font-size:11.7px;color:#e2e2e2">Uniform</div>
<div class="t" style="left:1503px;top:734.6px;font-size:12.2px;color:#e2e2e2">Minimum</div>
<div class="box" style="left:1574px;top:727px;width:60px;height:25px"></div>
<div class="t" style="left:1577px;top:734.6px;font-size:11.7px;color:#c6c6c6">1.0000</div>
<div class="box" style="left:1647px;top:727px;width:60px;height:25px"></div>
<div class="t" style="left:1650px;top:734.6px;font-size:11.7px;color:#c6c6c6">1.0000</div>
<div class="box" style="left:1720px;top:727px;width:60px;height:25px"></div>
<div class="t" style="left:1723px;top:734.6px;font-size:11.7px;color:#c6c6c6">1.0000</div>
<div class="t" style="left:1503px;top:761.6px;font-size:11.7px;color:#e2e2e2">Scale All</div>
<div class="box" style="left:1503px;top:777px;width:60px;height:25px"></div>
<div class="t" style="left:1506.5px;top:784.5px;font-size:11.7px;color:#c6c6c6">1.0000</div>
<div class="a" style="left:1574px;top:780px;width:222px;height:20px;background:#252525;border:1px solid #474747"></div><div class="a" style="left:1577px;top:783px;width:216px;height:14px;background:repeating-linear-gradient(90deg,#959595 0,#959595 1px,transparent 1px,transparent 4px);-webkit-mask-image:linear-gradient(90deg,rgba(0,0,0,0.15),rgba(0,0,0,1) 55%,rgba(0,0,0,0.15))"></div>
<div class="t" style="left:1503px;top:832.5px;font-size:12.2px;color:#e2e2e2">Maximum</div>
<div class="box" style="left:1574px;top:825px;width:60px;height:25px"></div>
<div class="t" style="left:1577px;top:832.6px;font-size:11.7px;color:#c6c6c6">1.0000</div>
<div class="box" style="left:1647px;top:825px;width:60px;height:25px"></div>
<div class="t" style="left:1650px;top:832.6px;font-size:11.7px;color:#c6c6c6">1.0000</div>
<div class="box" style="left:1720px;top:825px;width:60px;height:25px"></div>
<div class="t" style="left:1723px;top:832.6px;font-size:11.7px;color:#c6c6c6">1.0000</div>
<div class="t" style="left:1503px;top:859.6px;font-size:11.7px;color:#e2e2e2">Scale All</div>
<div class="box" style="left:1503px;top:875px;width:60px;height:25px"></div>
<div class="t" style="left:1506.5px;top:882.5px;font-size:11.7px;color:#c6c6c6">1.0000</div>
<div class="a" style="left:1574px;top:878px;width:222px;height:20px;background:#252525;border:1px solid #474747"></div><div class="a" style="left:1577px;top:881px;width:216px;height:14px;background:repeating-linear-gradient(90deg,#959595 0,#959595 1px,transparent 1px,transparent 4px);-webkit-mask-image:linear-gradient(90deg,rgba(0,0,0,0.15),rgba(0,0,0,1) 55%,rgba(0,0,0,0.15))"></div>
</body></html>
